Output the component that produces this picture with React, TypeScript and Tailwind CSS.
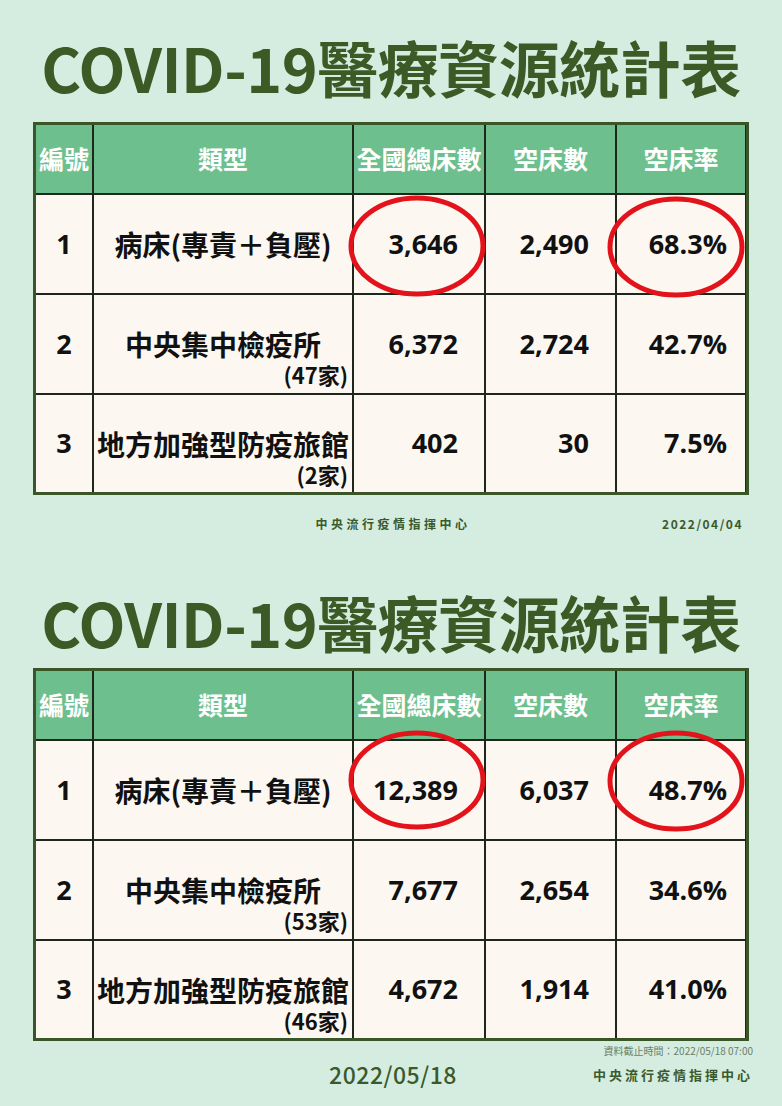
import React from 'react';

type Row = {
  no: string;
  name: string;
  sub?: string;
  total: string;
  empty: string;
  rate: string;
};

type Mark = {
  box: string;
  w: number;
  h: number;
};

const tables: { rows: Row[]; marks: [Mark, Mark] }[] = [
  {
    rows: [
      { no: '1', name: '病床(專責＋負壓)', total: '3,646', empty: '2,490', rate: '68.3%' },
      { no: '2', name: '中央集中檢疫所', sub: '(47家)', total: '6,372', empty: '2,724', rate: '42.7%' },
      { no: '3', name: '地方加強型防疫旅館', sub: '(2家)', total: '402', empty: '30', rate: '7.5%' },
    ],
    marks: [
      { box: 'left-[-6px] top-0 w-[138px] h-[102px]', w: 138, h: 102 },
      { box: 'left-[-10px] top-[1px] w-[138px] h-[102px]', w: 138, h: 102 },
    ],
  },
  {
    rows: [
      { no: '1', name: '病床(專責＋負壓)', total: '12,389', empty: '6,037', rate: '48.7%' },
      { no: '2', name: '中央集中檢疫所', sub: '(53家)', total: '7,677', empty: '2,654', rate: '34.6%' },
      { no: '3', name: '地方加強型防疫旅館', sub: '(46家)', total: '4,672', empty: '1,914', rate: '41.0%' },
    ],
    marks: [
      { box: 'left-[-6px] top-[-11px] w-[138px] h-[100px]', w: 138, h: 100 },
      { box: 'left-[-10px] top-[-11px] w-[138px] h-[102px]', w: 138, h: 102 },
    ],
  },
];

const font = "font-['Open_Sans','Noto_Sans_CJK_TC',sans-serif]";

function Circle({ mark }: { mark: Mark }) {
  return (
    <svg
      className={`absolute z-10 pointer-events-none ${mark.box}`}
      viewBox={`0 0 ${mark.w} ${mark.h}`}
    >
      <ellipse
        cx={mark.w / 2}
        cy={mark.h / 2}
        rx={mark.w / 2 - 3}
        ry={mark.h / 2 - 3}
        fill="none"
        stroke="#e3131b"
        strokeWidth="5"
      />
    </svg>
  );
}

function Title() {
  return (
    <h1 className="h-[62px] text-[61px] leading-[62px] font-bold text-[#3b5a26] text-center tracking-[-0.5px] whitespace-nowrap font-['Noto_Sans_CJK_TC',sans-serif]">
      COVID-19醫療資源統計表
    </h1>
  );
}

function StatTable({ rows, marks }: { rows: Row[]; marks: [Mark, Mark] }) {
  const head = ['編號', '類型', '全國總床數', '空床數', '空床率'];
  return (
    <div className="border-[3px] border-[#3a5528] bg-[#1f261c] grid grid-cols-[56px_258px_130px_129px_128px] grid-rows-[68px_98px_98px_97px] gap-[2px]">
      {head.map((h) => (
        <div
          key={h}
          className="bg-[#6ebf8e] flex items-center justify-center text-white text-[25px] font-bold whitespace-nowrap font-['Noto_Sans_CJK_TC',sans-serif]"
        >
          {h}
        </div>
      ))}
      {rows.map((r, i) => (
        <React.Fragment key={r.no}>
          <div className={`bg-[#fcf8f1] flex items-center justify-center text-[27px] font-bold text-[#111] ${font}`}>
            {r.no}
          </div>
          <div className="bg-[#fcf8f1] flex flex-col justify-center text-[#111] font-bold font-['Noto_Sans_CJK_TC',sans-serif]">
            {r.sub ? <div className="h-[30px]" /> : null}
            <div className="h-[30px] text-[28px] leading-[30px] text-center whitespace-nowrap">{r.name}</div>
            {r.sub ? (
              <div className="h-[30px] text-[22px] leading-[30px] text-right pr-[4px]">{r.sub}</div>
            ) : null}
          </div>
          <div className={`relative bg-[#fcf8f1] flex items-center justify-end pr-[26px] text-[27px] font-bold text-[#111] ${font}`}>
            {i === 0 ? <Circle mark={marks[0]} /> : null}
            {r.total}
          </div>
          <div className={`bg-[#fcf8f1] flex items-center justify-end pr-[26px] text-[27px] font-bold text-[#111] ${font}`}>
            {r.empty}
          </div>
          <div className={`relative bg-[#fcf8f1] flex items-center justify-end pr-[18px] text-[27px] font-bold text-[#111] ${font}`}>
            {i === 0 ? <Circle mark={marks[1]} /> : null}
            {r.rate}
          </div>
        </React.Fragment>
      ))}
    </div>
  );
}

export default function App() {
  return (
    <div className="w-[782px] h-[1106px] bg-[#d4ede0] px-[33px] pt-[36px] overflow-hidden">
      <Title />
      <div className="mt-[24px]">
        <StatTable {...tables[0]} />
      </div>
      <div className="h-[58px] grid grid-cols-[1fr_auto_1fr] items-center text-[#3b5a2c] font-bold text-[12px] font-['Noto_Sans_CJK_TC',sans-serif]">
        <div />
        <div className="tracking-[3.5px] pl-[4px]">中央流行疫情指揮中心</div>
        <div className="text-right pr-[6px] tracking-[1.5px]">2022/04/04</div>
      </div>
      <div className="mt-[38px]">
        <Title />
      </div>
      <div className="mt-[15px]">
        <StatTable {...tables[1]} />
      </div>
      <div className="mt-[3px] -mr-[4px] h-[13px] leading-[13px] text-right text-[10px] text-[#6c7d69] font-['Noto_Sans_CJK_TC',sans-serif]">
        資料截止時間：2022/05/18 07:00
      </div>
      <div className="-mr-[4px] h-[34px] grid grid-cols-[1fr_auto_1fr] items-center text-[#3b5a2c] font-['Noto_Sans_CJK_TC',sans-serif]">
        <div />
        <div className="text-[23px] tracking-[0.5px] font-medium">2022/05/18</div>
        <div className="text-right text-[13px] font-bold tracking-[3px]">中央流行疫情指揮中心</div>
      </div>
    </div>
  );
}
